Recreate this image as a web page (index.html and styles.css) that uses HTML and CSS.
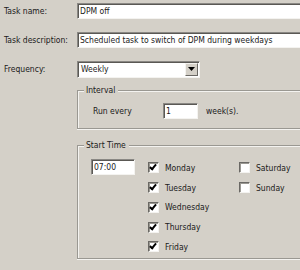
FILE: index.html
```html
<!DOCTYPE html>
<html>
<head>
<meta charset="utf-8">
<link rel="stylesheet" href="styles.css">
</head>
<body>
<div class="form">
  <div class="row">
    <span class="label">Task name:</span>
    <div class="edit wide">DPM off</div>
  </div>
  <div class="row">
    <span class="label">Task description:</span>
    <div class="edit wide">Scheduled task to switch of DPM during weekdays</div>
  </div>
  <div class="row">
    <span class="label">Frequency:</span>
    <div class="edit combo"><span class="combo-text">Weekly</span><span class="drop"><svg width="7" height="4" viewBox="0 0 7 4"><path d="M0 0h7L3.5 4z" fill="#000"/></svg></span></div>
  </div>
  <div class="group interval">
    <span class="legend">Interval</span>
    <div class="interval-row">
      <span class="run">Run every</span>
      <div class="edit num">1</div>
      <span class="unit">week(s).</span>
    </div>
  </div>
  <div class="group start">
    <span class="legend">Start Time</span>
    <div class="start-body">
      <div class="edit time">07:00</div>
      <div class="days col1">
        <div class="day"><span class="cb on"></span>Monday</div>
        <div class="day"><span class="cb on"></span>Tuesday</div>
        <div class="day"><span class="cb on"></span>Wednesday</div>
        <div class="day"><span class="cb on"></span>Thursday</div>
        <div class="day"><span class="cb on"></span>Friday</div>
      </div>
      <div class="days">
        <div class="day"><span class="cb"></span>Saturday</div>
        <div class="day"><span class="cb"></span>Sunday</div>
      </div>
    </div>
  </div>
</div>
</body>
</html>
```
FILE: styles.css
```css
html, body {
  margin: 0;
  padding: 0;
}
body {
  width: 300px;
  height: 270px;
  overflow: hidden;
  background: #d4d0c8;
  font-family: "DejaVu Sans Condensed", "Liberation Sans", sans-serif;
  font-size: 8.5px;
  color: #1a1a1a;
}
.form {
  padding: 3px 0 0 4px;
}
.row {
  display: flex;
  align-items: center;
  height: 16px;
  margin-bottom: 13px;
}
.label {
  width: 73px;
  flex: none;
}
.edit {
  box-sizing: border-box;
  height: 16px;
  background: #fff;
  border: 1px solid;
  border-color: #8a8884 #f4f3f0 #f4f3f0 #8a8884;
  box-shadow: inset 1px 1px 0 #5a5854;
  display: flex;
  align-items: center;
  padding-left: 2px;
  white-space: nowrap;
  overflow: hidden;
  flex: none;
}
.wide {
  width: 223px;
  border-right: 0;
}
.combo {
  width: 123px;
  height: 17px;
  padding-left: 3px;
}
.combo-text {
  flex: 1;
}
.drop {
  width: 13px;
  height: 13px;
  box-sizing: border-box;
  margin-right: 1px;
  background: #d4d0c8;
  border: 1px solid;
  border-color: #f4f3f0 #6a6864 #6a6864 #f4f3f0;
  display: flex;
  align-items: center;
  justify-content: center;
}
.group {
  position: relative;
  box-sizing: border-box;
  margin-left: 73px;
  width: 223px;
  border: 1px solid #9a9892;
  border-right: 0;
  box-shadow: inset 1px 1px 0 #f4f3f0, 0 1px 0 #f4f3f0;
}
.legend {
  position: absolute;
  left: 6px;
  top: -6px;
  padding: 0 3px 0 2px;
  background: #d4d0c8;
  line-height: 11px;
}
.interval {
  height: 39px;
  padding: 12px 0 0 15px;
}
.interval-row {
  display: flex;
  align-items: center;
}
.run {
  width: 70px;
}
.num {
  width: 35px;
}
.unit {
  margin-left: 8px;
}
.start {
  margin-top: 16px;
  height: 114px;
  padding: 13px 0 0 13px;
}
.start-body {
  display: flex;
  align-items: flex-start;
}
.time {
  width: 44px;
}
.days {
  margin-top: -1px;
}
.col1 {
  margin-left: 13px;
  width: 91px;
}
.day {
  display: flex;
  align-items: center;
  height: 19.75px;
}
.cb {
  box-sizing: border-box;
  width: 11px;
  height: 11px;
  margin-right: 6px;
  background: #fff;
  border: 1px solid;
  border-color: #6a6864 #f4f3f0 #f4f3f0 #6a6864;
  box-shadow: inset 1px 1px 0 #9a9892;
  position: relative;
}
.cb.on::after {
  content: "";
  position: absolute;
  left: 2px;
  top: 0px;
  width: 2px;
  height: 5px;
  border: solid #000;
  border-width: 0 2px 2px 0;
  transform: rotate(40deg);
  transform-origin: center;
}
```
